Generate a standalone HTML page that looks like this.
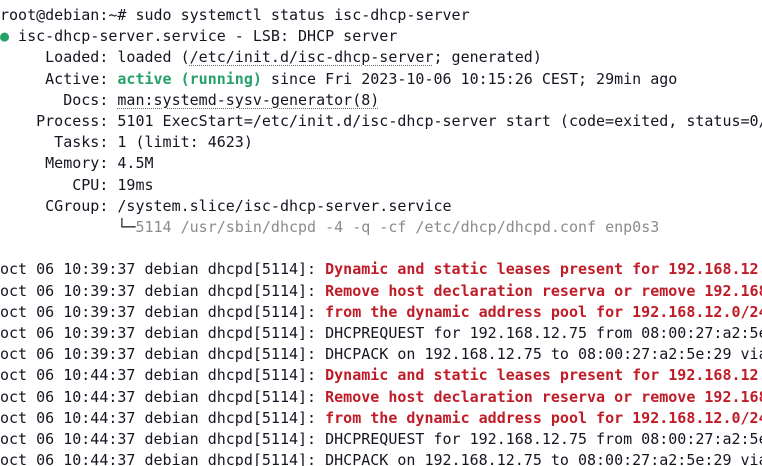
<html><head><style>
body{margin:0;background:#fff;width:762px;height:466px;overflow:hidden;position:relative}
pre{margin:0;position:absolute;left:0;top:5px;width:762px;height:461px;overflow:hidden;font:15px/21.2px "DejaVu Sans Mono","Liberation Mono",monospace;color:#171421;white-space:pre}
.g{color:#26a269;font-weight:bold}.r{color:#c01c28;font-weight:bold}.d{color:#8b8b8b}
.u{text-decoration:underline dotted #666;text-decoration-thickness:1px;text-underline-offset:3px}.b{color:#26a269}
</style></head><body><pre>root@debian:~# sudo systemctl status isc-dhcp-server
<span class="b">●</span> isc-dhcp-server.service - LSB: DHCP server
     Loaded: loaded (<span class="u">/etc/init.d/isc-dhcp-server</span>; generated)
     Active: <span class="g">active (running)</span> since Fri 2023-10-06 10:15:26 CEST; 29min ago
       Docs: <span class="u">man:systemd-sysv-generator(8)</span>
    Process: 5101 ExecStart=/etc/init.d/isc-dhcp-server start (code=exited, status=0/SUCCESS)
      Tasks: 1 (limit: 4623)
     Memory: 4.5M
        CPU: 19ms
     CGroup: /system.slice/isc-dhcp-server.service
             └─<span class="d">5114 /usr/sbin/dhcpd -4 -q -cf /etc/dhcp/dhcpd.conf enp0s3</span>

oct 06 10:39:37 debian dhcpd[5114]: <span class="r">Dynamic and static leases present for 192.168.12.75.</span>
oct 06 10:39:37 debian dhcpd[5114]: <span class="r">Remove host declaration reserva or remove 192.168.12.75</span>
oct 06 10:39:37 debian dhcpd[5114]: <span class="r">from the dynamic address pool for 192.168.12.0/24</span>
oct 06 10:39:37 debian dhcpd[5114]: DHCPREQUEST for 192.168.12.75 from 08:00:27:a2:5e:29 via enp0s3
oct 06 10:39:37 debian dhcpd[5114]: DHCPACK on 192.168.12.75 to 08:00:27:a2:5e:29 via enp0s3
oct 06 10:44:37 debian dhcpd[5114]: <span class="r">Dynamic and static leases present for 192.168.12.75.</span>
oct 06 10:44:37 debian dhcpd[5114]: <span class="r">Remove host declaration reserva or remove 192.168.12.75</span>
oct 06 10:44:37 debian dhcpd[5114]: <span class="r">from the dynamic address pool for 192.168.12.0/24</span>
oct 06 10:44:37 debian dhcpd[5114]: DHCPREQUEST for 192.168.12.75 from 08:00:27:a2:5e:29 via enp0s3
oct 06 10:44:37 debian dhcpd[5114]: DHCPACK on 192.168.12.75 to 08:00:27:a2:5e:29 via enp0s3
</pre></body></html>
